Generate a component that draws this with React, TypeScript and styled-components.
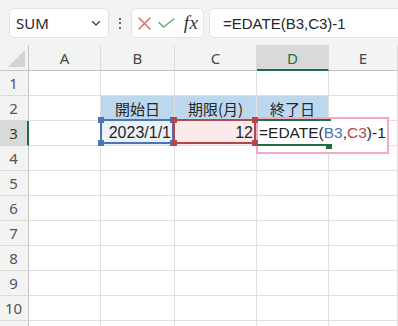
import React from 'react';
import styled, { createGlobalStyle } from 'styled-components';

const Global = createGlobalStyle`
  html, body { margin: 0; padding: 0; background: #ffffff; }
  body { font-family: "Liberation Sans", "Noto Sans CJK JP", sans-serif; }
  #root { width: 398px; height: 326px; }
`;

const Page = styled.div`
  width: 398px;
  height: 326px;
  overflow: hidden;
  display: flex;
  flex-direction: column;
  background: #ffffff;
`;

const Toolbar = styled.div`
  height: 45px;
  flex-shrink: 0;
  box-sizing: border-box;
  padding: 8px 0 0 9px;
  background: #f3f3f3;
  display: flex;
  align-items: flex-start;
  overflow: hidden;
`;

const Field = styled.div`
  height: 30px;
  box-sizing: border-box;
  background: #ffffff;
  border: 1px solid #e2e2e2;
  border-radius: 5px;
  display: flex;
  align-items: center;
  flex-shrink: 0;
`;

const NameBox = styled(Field)`
  width: 100px;
  padding: 0 6px 0 6px;
  justify-content: space-between;
`;

const NameText = styled.span`
  font-family: "Noto Sans", sans-serif;
  font-size: 15px;
  color: #262626;
`;

const Kebab = styled.div`
  width: 22px;
  height: 30px;
  display: flex;
  flex-direction: column;
  align-items: center;
  justify-content: center;
  gap: 2.5px;
  flex-shrink: 0;
`;

const Dot = styled.span`
  width: 2px;
  height: 2px;
  border-radius: 1px;
  background: #3a3a3a;
`;

const FxGroup = styled(Field)`
  width: 73px;
  padding: 0 0 0 5px;
  gap: 0;
`;

const IconSlot = styled.span<{ $w: number }>`
  width: ${(p) => p.$w}px;
  height: 28px;
  display: flex;
  align-items: center;
  justify-content: center;
`;

const FxText = styled.span`
  font-family: "Liberation Serif", serif;
  font-style: italic;
  font-size: 19px;
  color: #333333;
  letter-spacing: 0.5px;
`;

const FormulaBox = styled(Field)`
  width: 220px;
  margin-left: 5px;
  padding-left: 13px;
`;

const FormulaText = styled.span`
  font-family: "Liberation Sans", sans-serif;
  font-size: 15px;
  color: #262626;
`;

const Sheet = styled.div`
  display: grid;
  grid-template-columns: 29px 72px 74px 82px 72px 1fr;
  grid-template-rows: 26px;
  grid-auto-rows: 25px;
  font-size: 16px;
  color: #1f1f1f;
`;

const HeadBase = styled.div`
  box-sizing: border-box;
  background: #f3f3f3;
  display: flex;
  align-items: center;
  justify-content: center;
  font-family: "Noto Sans", sans-serif;
  font-size: 15px;
  color: #464646;
`;

const Corner = styled(HeadBase)`
  border-right: 1px solid #c4c4c4;
  border-bottom: 1px solid #c4c4c4;
  justify-content: flex-end;
  align-items: flex-end;
  padding: 0 3px 3px 0;
`;

const ColHeader = styled(HeadBase)<{ $active?: boolean }>`
  border-right: 1px solid #dadada;
  border-bottom: ${(p) => (p.$active ? '2px solid #1e6e42' : '1px solid #c4c4c4')};
  background: ${(p) => (p.$active ? '#d9d9d9' : '#f3f3f3')};
  color: ${(p) => (p.$active ? '#1e6e42' : '#464646')};
  padding-top: ${(p) => (p.$active ? '1px' : '0')};
`;

const RowHeader = styled(HeadBase)<{ $active?: boolean }>`
  border-right: ${(p) => (p.$active ? '2px solid #1e6e42' : '1px solid #c4c4c4')};
  border-bottom: 1px solid #dadada;
  background: ${(p) => (p.$active ? '#d9d9d9' : '#f3f3f3')};
  color: ${(p) => (p.$active ? '#3a3a3a' : '#555555')};
  padding-right: ${(p) => (p.$active ? '0' : '1px')};
`;

const Cell = styled.div<{ $fill?: string; $align?: 'left' | 'center' | 'right' }>`
  position: relative;
  box-sizing: border-box;
  border-right: 1px solid #e0e0e0;
  border-bottom: 1px solid #e0e0e0;
  background: ${(p) => p.$fill || '#ffffff'};
  display: flex;
  align-items: center;
  justify-content: ${(p) =>
    p.$align === 'right' ? 'flex-end' : p.$align === 'center' ? 'center' : 'flex-start'};
  padding: 0 3px 0 3px;
  white-space: nowrap;
`;

const Label = styled.span`
  font-family: "Noto Sans CJK JP", sans-serif;
  font-size: 15px;
  color: #262626;
  position: relative;
  z-index: 1;
`;

const Value = styled.span`
  font-family: "Liberation Sans", sans-serif;
  font-size: 16px;
  color: #1f1f1f;
  position: relative;
  z-index: 6;
`;

const RangeFrame = styled.div<{ $color: string; $l: number; $t: number; $w: number; $h: number; $z: number }>`
  position: absolute;
  left: ${(p) => p.$l}px;
  top: ${(p) => p.$t}px;
  width: ${(p) => p.$w}px;
  height: ${(p) => p.$h}px;
  box-sizing: border-box;
  border: 2px solid ${(p) => p.$color};
  z-index: ${(p) => p.$z};
  pointer-events: none;
`;

const Handle = styled.span<{ $color: string; $x: 'l' | 'r'; $y: 't' | 'b' }>`
  position: absolute;
  width: 6px;
  height: 6px;
  background: ${(p) => p.$color};
  ${(p) => (p.$x === 'l' ? 'left: -4px;' : 'right: -4px;')}
  ${(p) => (p.$y === 't' ? 'top: -4px;' : 'bottom: -4px;')}
`;

const EditBox = styled.div`
  position: absolute;
  left: -1px;
  top: -4px;
  width: 133px;
  height: 37px;
  box-sizing: border-box;
  border: 2px solid #f2a9c4;
  background: #ffffff;
  z-index: 3;
  padding: 1px 0 0 1px;
`;

const EditText = styled.div`
  font-family: "Liberation Sans", sans-serif;
  font-size: 15.5px;
  line-height: 25px;
  color: #1f1f1f;
  white-space: nowrap;
  position: relative;
  z-index: 5;
`;

const Ref = styled.span<{ $color: string }>`
  color: ${(p) => p.$color};
`;

const ActiveLine = styled.span<{ $l: number; $t: number; $w: number; $h: number }>`
  position: absolute;
  left: ${(p) => p.$l}px;
  top: ${(p) => p.$t}px;
  width: ${(p) => p.$w}px;
  height: ${(p) => p.$h}px;
  background: #1e6e42;
  z-index: 4;
`;

const cols = ['A', 'B', 'C', 'D', 'E'];
const BLUE = '#4a74b6';
const RED = '#b3474c';

const Chevron = () => (
  <svg width="12" height="12" viewBox="0 0 12 12">
    <path d="M2.5 4.5 L6 8 L9.5 4.5" fill="none" stroke="#3a3a3a" strokeWidth="1.2" strokeLinecap="round" strokeLinejoin="round" />
  </svg>
);

const CornerTriangle = () => (
  <svg width="17" height="17" viewBox="0 0 17 17">
    <polygon points="17,0 17,17 0,17" fill="#d4d4d4" />
  </svg>
);

const Cross = () => (
  <svg width="13" height="13" viewBox="0 0 13 13">
    <path d="M1 1 L12 12 M12 1 L1 12" stroke="#dc6b6b" strokeWidth="1.5" strokeLinecap="round" />
  </svg>
);

const Check = () => (
  <svg width="17" height="10" viewBox="0 0 17 10">
    <path d="M1 4.5 L5.5 9 L16 1" fill="none" stroke="#62ab74" strokeWidth="1.5" strokeLinecap="round" strokeLinejoin="round" />
  </svg>
);

function renderRow(r: number) {
  const active = r === 3;
  const cells: React.ReactNode[] = [];
  cells.push(
    <RowHeader key={`h${r}`} $active={active}>
      {r <= 10 ? r : ''}
    </RowHeader>
  );
  cols.forEach((c) => {
    const key = `${c}${r}`;
    if (r === 2 && c === 'B') {
      cells.push(<Cell key={key} $fill="#bdd7ee" $align="center"><Label>開始日</Label></Cell>);
    } else if (r === 2 && c === 'C') {
      cells.push(<Cell key={key} $fill="#bdd7ee" $align="center"><Label>期限(月)</Label></Cell>);
    } else if (r === 2 && c === 'D') {
      cells.push(<Cell key={key} $fill="#bdd7ee" $align="center"><Label>終了日</Label></Cell>);
    } else if (r === 3 && c === 'B') {
      cells.push(
        <Cell key={key} $fill="#ebf1f9" $align="right">
          <Value>2023/1/1</Value>
          <RangeFrame $color={BLUE} $l={-1} $t={-2} $w={74} $h={25} $z={4}>
            <Handle $color={BLUE} $x="l" $y="t" />
            <Handle $color={BLUE} $x="l" $y="b" />
            <Handle $color={BLUE} $x="r" $y="t" />
            <Handle $color={BLUE} $x="r" $y="b" />
          </RangeFrame>
        </Cell>
      );
    } else if (r === 3 && c === 'C') {
      cells.push(
        <Cell key={key} $fill="#fbeaea" $align="right">
          <Value>12</Value>
          <RangeFrame $color={RED} $l={-2} $t={-2} $w={83} $h={25} $z={5}>
            <Handle $color={RED} $x="l" $y="t" />
            <Handle $color={RED} $x="l" $y="b" />
            <Handle $color={RED} $x="r" $y="t" />
            <Handle $color={RED} $x="r" $y="b" />
          </RangeFrame>
        </Cell>
      );
    } else if (r === 3 && c === 'D') {
      cells.push(
        <Cell key={key}>
          <EditBox>
            <EditText>
              =EDATE(<Ref $color={BLUE}>B3</Ref>,<Ref $color={RED}>C3</Ref>)-1
            </EditText>
          </EditBox>
          <ActiveLine $l={1} $t={-2} $w={73} $h={2} />
          <ActiveLine $l={1} $t={23} $w={68} $h={2} />
          <ActiveLine $l={69} $t={23} $w={6} $h={5} />
        </Cell>
      );
    } else {
      cells.push(<Cell key={key} />);
    }
  });
  return cells;
}

export default function App() {
  const rows = Array.from({ length: 11 }, (_, i) => i + 1);
  return (
    <Page>
      <Global />
      <Toolbar>
        <NameBox>
          <NameText>SUM</NameText>
          <Chevron />
        </NameBox>
        <Kebab>
          <Dot />
          <Dot />
          <Dot />
        </Kebab>
        <FxGroup>
          <IconSlot $w={14}><Cross /></IconSlot>
          <IconSlot $w={30}><Check /></IconSlot>
          <IconSlot $w={20}><FxText>fx</FxText></IconSlot>
        </FxGroup>
        <FormulaBox>
          <FormulaText>=EDATE(B3,C3)-1</FormulaText>
        </FormulaBox>
      </Toolbar>
      <Sheet>
        <Corner>
          <CornerTriangle />
        </Corner>
        {cols.map((c) => (
          <ColHeader key={c} $active={c === 'D'}>
            {c}
          </ColHeader>
        ))}
        {rows.map((r) => renderRow(r))}
      </Sheet>
    </Page>
  );
}
